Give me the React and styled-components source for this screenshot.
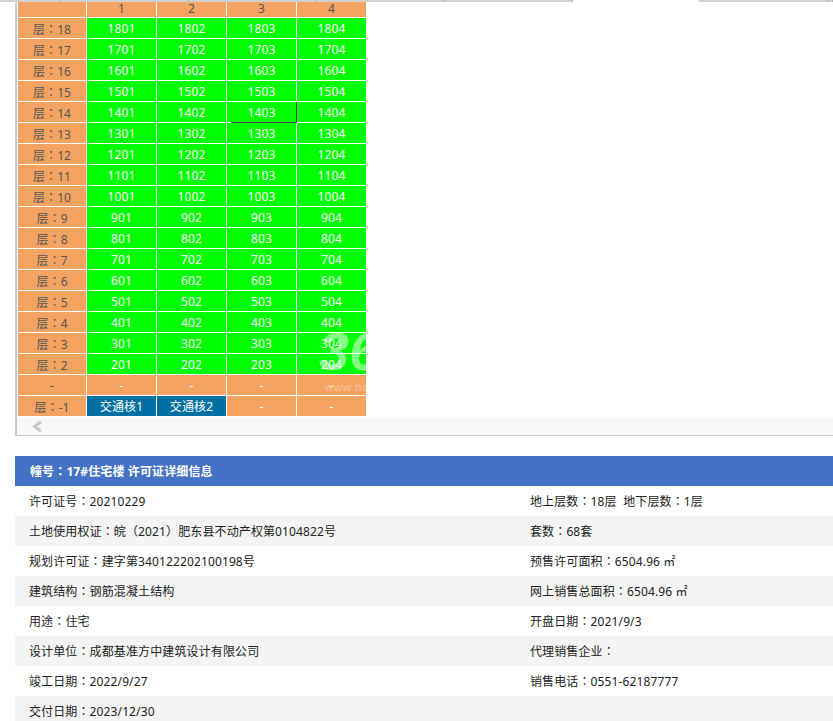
import React from 'react';
import styled, { createGlobalStyle } from 'styled-components';

const GlobalStyle = createGlobalStyle`
  html, body {
    margin: 0;
    padding: 0;
    background: #fff;
    overflow: hidden;
    font-family: "Noto Sans", "Noto Sans CJK SC", sans-serif;
    font-size: 12px;
    letter-spacing: 0.12px;
  }
`;

const Page = styled.div`
  width: 833px;
  height: 721px;
  overflow: hidden;
`;

const TabStrip = styled.div`
  display: flex;
  height: 2px;
`;

const TabEdge = styled.div`
  width: ${(props) => props.$width}px;
  background: ${(props) => (props.$blank ? '#fff' : '#d0d0d0')};
  border-right: ${(props) => (props.$blank ? 'none' : '1px solid #b4b4b4')};
  box-sizing: border-box;
`;

const ScrollBox = styled.div`
  position: relative;
  margin-left: 15px;
  border-left: 2px solid #ccc;
  border-bottom: 1px solid #c8c8c8;
`;

const FloorGrid = styled.div`
  display: grid;
  grid-template-columns: 68px repeat(4, 69px);
  grid-template-rows: 15px;
  grid-auto-rows: 20px;
  gap: 1px;
  margin-left: 1px;
`;

const Cell = styled.div`
  position: relative;
  box-sizing: border-box;
  text-align: center;
  padding-top: 2px;
  line-height: 18px;
  background: ${(props) => props.$bg || '#f4a460'};
  color: ${(props) => props.$color || '#fff'};

  ${(props) => props.$marked && `
    &::after {
      content: '';
      position: absolute;
      right: -1px;
      bottom: -1px;
      width: 65px;
      height: 20px;
      border-right: 1px solid #4b3f4b;
      border-bottom: 1px solid #4b3f4b;
    }
  `}
`;

const HeadCell = styled.div`
  text-align: center;
  line-height: 13px;
  background: #f4a460;
  color: #555;
`;

const Watermark = styled.div`
  position: absolute;
  left: 308px;
  top: 321px;
  pointer-events: none;
  white-space: nowrap;
`;

const WatermarkLogo = styled.div`
  margin-left: -6px;
  font-family: "Liberation Sans", sans-serif;
  font-style: italic;
  font-weight: 700;
  font-size: 54px;
  line-height: 57px;
  color: rgba(255, 255, 255, 0.5);
`;

const WatermarkUrl = styled.div`
  font-family: "Liberation Sans", sans-serif;
  font-size: 11px;
  letter-spacing: 1px;
  line-height: 14px;
  color: rgba(255, 255, 255, 0.35);
`;

const ScrollTrack = styled.div`
  display: flex;
  align-items: center;
  height: 17px;
  margin-top: 2px;
  padding-left: 15px;
  background: #f8f8f8;
`;

const Panel = styled.section`
  margin: 20px 0 0 15px;
`;

const PanelTitle = styled.h3`
  margin: 0;
  height: 30px;
  line-height: 30px;
  padding-left: 15px;
  background: #4472c4;
  color: #fff;
  font-size: 12px;
  font-weight: 700;
`;

const InfoRow = styled.div`
  display: grid;
  grid-template-columns: 501px 1fr;
  height: 30px;
  line-height: 30px;
  background: ${(props) => (props.$even ? '#f4f4f4' : '#fff')};
  color: #222;
`;

const InfoCell = styled.div`
  padding-left: 14px;
  white-space: pre;
`;

const Colon = styled.span`
  font-family: "Noto Sans CJK TC", sans-serif;
`;

const floors = [18, 17, 16, 15, 14, 13, 12, 11, 10, 9, 8, 7, 6, 5, 4, 3, 2];

const details = [
  ['许可证号：20210229', '地上层数：18层\u00a0\u00a0地下层数：1层'],
  ['土地使用权证：皖（2021）肥东县不动产权第0104822号', '套数：68套'],
  ['规划许可证：建字第340122202100198号', '预售许可面积：6504.96 ㎡'],
  ['建筑结构：钢筋混凝土结构', '网上销售总面积：6504.96 ㎡'],
  ['用途：住宅', '开盘日期：2021/9/3'],
  ['设计单位：成都基准方中建筑设计有限公司', '代理销售企业：'],
  ['竣工日期：2022/9/27', '销售电话：0551-62187777'],
  ['交付日期：2023/12/30', ''],
];

// the site's font centres the full-width colon, SC pushes it into the corner
const withColon = (text) =>
  text.split('：').flatMap((part, i) => (i === 0 ? [part] : [<Colon key={i}>：</Colon>, part]));

const App = () => {
  return (
    <Page>
      <GlobalStyle />
      <TabStrip>
        <TabEdge $width={60} />
        <TabEdge $width={129} />
        <TabEdge $width={127} />
        <TabEdge $width={128} />
        <TabEdge $width={129} />
        <TabEdge $width={126} $blank />
        <TabEdge $width={130} />
        <TabEdge $width={4} />
      </TabStrip>

      <ScrollBox>
        <FloorGrid>
          <HeadCell />
          {[1, 2, 3, 4].map((n) => (
            <HeadCell key={n}>{n}</HeadCell>
          ))}

          {floors.map((floor) => (
            <React.Fragment key={floor}>
              <Cell $color="#555">{withColon(`层：${floor}`)}</Cell>
              {[1, 2, 3, 4].map((n) => (
                <Cell
                  key={n}
                  $bg="#00ff00"
                  $marked={floor === 14 && n === 3}
                >
                  {floor * 100 + n}
                </Cell>
              ))}
            </React.Fragment>
          ))}

          <Cell $color="#555">-</Cell>
          {[1, 2, 3, 4].map((n) => (
            <Cell key={n}>-</Cell>
          ))}

          <Cell $color="#555">{withColon('层：-1')}</Cell>
          <Cell $bg="#0070a2">交通核1</Cell>
          <Cell $bg="#0070a2">交通核2</Cell>
          <Cell>-</Cell>
          <Cell>-</Cell>
        </FloorGrid>

        <Watermark>
          <WatermarkLogo>365</WatermarkLogo>
          <WatermarkUrl>www.house365.com</WatermarkUrl>
        </Watermark>

        <ScrollTrack>
          <svg width="10" height="11" viewBox="0 0 10 11">
            <path d="M9 0.7 L2.6 5.5 L9 10.3" fill="none" stroke="#c9c9c9" strokeWidth="3" />
          </svg>
        </ScrollTrack>
      </ScrollBox>

      <Panel>
        <PanelTitle>{withColon('幢号：17#住宅楼 许可证详细信息')}</PanelTitle>
        {details.map(([left, right], i) => (
          <InfoRow key={left} $even={i % 2 === 1}>
            <InfoCell>{withColon(left)}</InfoCell>
            <InfoCell>{withColon(right)}</InfoCell>
          </InfoRow>
        ))}
      </Panel>
    </Page>
  );
};

export default App;
